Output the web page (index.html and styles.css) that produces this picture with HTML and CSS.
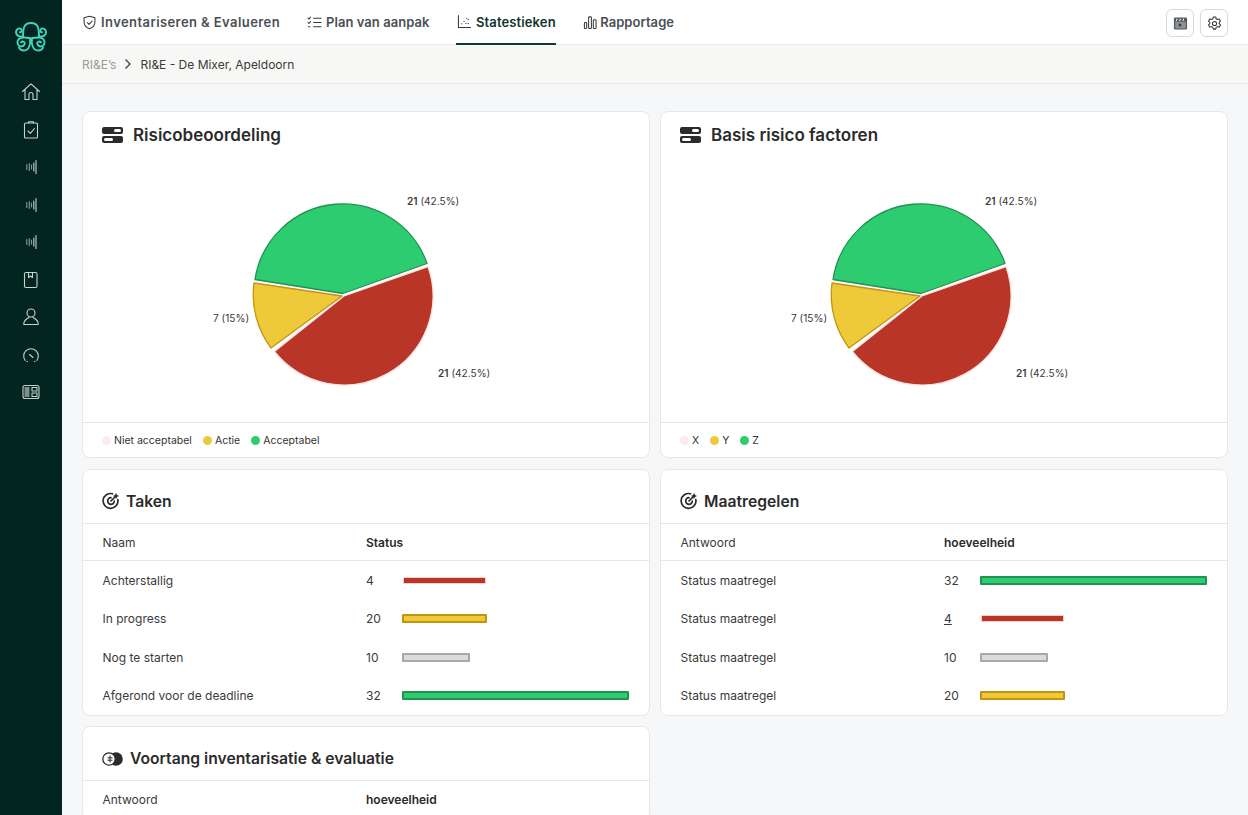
FILE: index.html
```html
<!DOCTYPE html>
<html lang="nl">
<head>
<meta charset="utf-8">
<title>Statestieken</title>
<link rel="stylesheet" href="styles.css">
</head>
<body>
<div class="app">
  <aside class="sidebar">
    <svg class="logo" viewBox="0 0 32 30" fill="none" stroke="#3ed6bd" stroke-width="1.900" stroke-linecap="round">
      <path d="M8 14.500C8 6 9 1 16 1s8 5 8 13.500"/>
      <path d="M8 14.500C6 15 1 14.500 1 10c0-3 3-4.500 5-3 1.500 1.300.5 3.500-1 3.300"/>
      <path d="M24 14.500c2 .5 7 0 7-4.500 0-3-3-4.500-5-3-1.500 1.300-.5 3.500 1 3.300"/>
      <path d="M14 16C9 15 2 15 2.500 21c.5 4 5.500 4.500 7 1.500 1-2.500-2-4-3.500-2.200"/>
      <path d="M18 16c5-1 12-1 11.500 5-.5 4-5.500 4.500-7 1.500-1-2.500 2-4 3.500-2.200"/>
      <path d="M15 16c1 6-1 12.500-6 12.500-2.500 0-4.500-1.500-5-3"/>
      <path d="M17 16c-1 6 1 12.500 6 12.500 2.500 0 4.500-1.500 5-3"/>
    </svg>
    <nav class="side-nav">
      <a class="side-link"><svg viewBox="0 0 20 20"><path d="M1.500 9.500 10 1.800l8.500 7.700M4 8v9.500h4v-5a2 2 0 0 1 4 0v5h4V8"/></svg></a>
      <a class="side-link"><svg viewBox="0 0 20 20"><rect x="3.500" y="3" width="13" height="15" rx="1"/><path d="M7.500 3V1.800h5V3M7 11l2.300 2.300L13.500 8.500"/></svg></a>
      <a class="side-link"><svg class="wave" viewBox="0 0 20 20"><path class="dim" d="M5.800 7.500v5M8.300 6.500v7M10.500 8v4"/><path d="M12.800 6v8M15 3.500v13"/></svg></a>
      <a class="side-link"><svg class="wave" viewBox="0 0 20 20"><path class="dim" d="M5.800 7.500v5M8.300 6.500v7M10.500 8v4"/><path d="M12.800 6v8M15 3.500v13"/></svg></a>
      <a class="side-link"><svg class="wave" viewBox="0 0 20 20"><path class="dim" d="M5.800 7.500v5M8.300 6.500v7M10.500 8v4"/><path d="M12.800 6v8M15 3.500v13"/></svg></a>
      <a class="side-link"><svg viewBox="0 0 20 20"><rect x="3.500" y="2.500" width="12.500" height="15" rx="1.500"/><path d="M7.500 2.500v5l2-1.500 2 1.500v-5"/></svg></a>
      <a class="side-link"><svg viewBox="0 0 20 20"><circle cx="10" cy="6" r="4"/><path d="M8 10.500C5 12 2.500 14 2.800 17.500h14.400C17.500 14 15 12 12 10.500"/></svg></a>
      <a class="side-link"><svg viewBox="0 0 20 20"><path d="M4.200 15.500a7.300 7.300 0 1 1 11.600 0M8.500 9.500l3.500 3"/><path d="M6 16.500h.5M13.500 16.500h.5"/></svg></a>
      <a class="side-link"><svg viewBox="0 0 20 20"><rect x="2" y="3.500" width="16" height="13" rx="2"/><rect x="3.500" y="5" width="5" height="10" fill="#7f8f8b" stroke="none"/><path d="M11 5.500h5v3.500h-5zM11 11h5v3.500h-5z"/></svg></a>
    </nav>
  </aside>
  <div class="content">
    <header class="topbar">
      <nav class="tabs">
        <a class="tab tab-wide"><svg viewBox="0 0 16 16"><path d="M8 1.300 13.800 3v4.500c0 3.500-2.500 6-5.800 7.200C4.700 13.500 2.200 11 2.200 7.500V3zM5.500 8l2 2 3.300-3.500"/></svg>Inventariseren &amp; Evalueren</a>
        <a class="tab"><svg viewBox="0 0 16 16"><path d="M7 3.500h8M7 8h8M7 12.500h8M1 3.300l1 1 1.800-2M1 8l1 1 1.800-2M1.500 12.500h1.500"/></svg>Plan van aanpak</a>
        <a class="tab tab-active"><svg viewBox="0 0 16 16"><path d="M1.500 1.500v13h13"/><path class="dots" d="M5 10.500h.01M7.500 8h.01M9.500 10h.01M12 6h.01M10.500 5h.01M12 10h.01"/></svg>Statestieken</a>
        <a class="tab tab-tight"><svg viewBox="0 0 14 16"><rect x="1" y="8" width="2.500" height="6.500" rx="1"/><rect x="5.500" y="2" width="3" height="12.500" rx="1"/><rect x="10.500" y="5" width="3" height="9.500" rx="1"/></svg>Rapportage</a>
      </nav>
      <div class="top-actions">
        <button class="icon-btn"><svg viewBox="0 0 16 16"><rect class="film" x="1" y="1.500" width="14" height="13" rx="1.500"/><path class="slash" d="M3.500 5l1-2M7 5l1-2M10.500 5l1-2"/><rect class="film-body" x="2.300" y="6" width="11.400" height="7.300"/><path class="solid" d="M6.300 7.800v3.800l3.400-1.900z"/></svg></button>
        <button class="icon-btn"><svg viewBox="0 0 16 16"><circle cx="8" cy="8" r="2.200"/><path d="M6.700 1h2.600l.4 1.900 1.500.8 1.800-.6 1.400 2.400-1.400 1.300v1.400l1.400 1.300-1.400 2.400-1.800-.6-1.500.8-.4 1.900H6.700l-.4-1.900-1.500-.8-1.800.6-1.400-2.400 1.400-1.300V6.800L1.600 5.500 3 3.100l1.800.6 1.500-.8z"/></svg></button>
      </div>
    </header>
    <div class="crumbs">
      <span class="crumb-muted">RI&amp;E’s</span>
      <svg class="crumb-sep" viewBox="0 0 8 12"><path d="M1.500 1.500 6 6l-4.500 4.500"/></svg>
      <span class="crumb-current">RI&amp;E - De Mixer, Apeldoorn</span>
    </div>
    <main class="main">
      <section class="card card-pie">
        <h2 class="pie-title"><svg class="title-icon-wide" viewBox="0 0 21 16"><rect x="0" y="0" width="21" height="7" rx="2"/><rect x="12" y="2" width="7" height="3" rx="1.500" fill="#fff"/><rect x="0" y="9" width="21" height="7" rx="2"/><rect x="2" y="11" width="9" height="3" rx="1.500" fill="#fff"/></svg>Risicobeoordeling</h2>
        <svg class="pie" viewBox="0 0 566 262">
          <path class="g" d="M260 133.500 172 119.500A89 89 0 0 1 344 103.500Z"/>
          <path class="r" d="M261 136 345 106.600A89 89 0 0 1 191.400 191.500Z"/>
          <path class="y" d="M259 136 171 123A89 89 0 0 0 188 188Z"/>
          <text x="324" y="45"><tspan class="lb">21</tspan> (42.5%)</text>
          <text x="130" y="162">7 (15%)</text>
          <text x="355" y="217"><tspan class="lb">21</tspan> (42.5%)</text>
        </svg>
        <div class="legend">
          <span class="legend-item"><i class="dot dot-red"></i>Niet acceptabel</span>
          <span class="legend-item"><i class="dot dot-yellow"></i>Actie</span>
          <span class="legend-item"><i class="dot dot-green"></i>Acceptabel</span>
        </div>
      </section>
      <section class="card card-pie">
        <h2 class="pie-title"><svg class="title-icon-wide" viewBox="0 0 21 16"><rect x="0" y="0" width="21" height="7" rx="2"/><rect x="12" y="2" width="7" height="3" rx="1.500" fill="#fff"/><rect x="0" y="9" width="21" height="7" rx="2"/><rect x="2" y="11" width="9" height="3" rx="1.500" fill="#fff"/></svg>Basis risico factoren</h2>
        <svg class="pie" viewBox="0 0 566 262">
          <path class="g" d="M260 133.500 172 119.500A89 89 0 0 1 344 103.500Z"/>
          <path class="r" d="M261 136 345 106.600A89 89 0 0 1 191.400 191.500Z"/>
          <path class="y" d="M259 136 171 123A89 89 0 0 0 188 188Z"/>
          <text x="324" y="45"><tspan class="lb">21</tspan> (42.5%)</text>
          <text x="130" y="162">7 (15%)</text>
          <text x="355" y="217"><tspan class="lb">21</tspan> (42.5%)</text>
        </svg>
        <div class="legend">
          <span class="legend-item"><i class="dot dot-red"></i>X</span>
          <span class="legend-item"><i class="dot dot-yellow"></i>Y</span>
          <span class="legend-item"><i class="dot dot-green"></i>Z</span>
        </div>
      </section>
      <section class="card">
        <h2 class="table-title"><svg class="title-icon" viewBox="0 0 18 18"><path d="M15.800 7.500A7.400 7.400 0 1 1 10.500 1.800M12.300 9a3.300 3.300 0 1 1-3.300-3.300"/><path d="M9 9l4.500-4.500"/><path class="star" d="M14 1l1 2 2 1-2 1-1 2-1-2-2-1 2-1z"/></svg>Taken</h2>
        <div class="row row-head"><span>Naam</span><b>Status</b></div>
        <div class="row"><span>Achterstallig</span><span class="val">4</span><div class="bar bar-red" style="width:83px"></div></div>
        <div class="row"><span>In progress</span><span class="val">20</span><div class="bar bar-yellow" style="width:85px"></div></div>
        <div class="row"><span>Nog te starten</span><span class="val">10</span><div class="bar bar-gray" style="width:68px"></div></div>
        <div class="row"><span>Afgerond voor de deadline</span><span class="val">32</span><div class="bar bar-green" style="width:227px"></div></div>
      </section>
      <section class="card">
        <h2 class="table-title"><svg class="title-icon" viewBox="0 0 18 18"><path d="M15.800 7.500A7.400 7.400 0 1 1 10.500 1.800M12.300 9a3.300 3.300 0 1 1-3.300-3.300"/><path d="M9 9l4.500-4.500"/><path class="star" d="M14 1l1 2 2 1-2 1-1 2-1-2-2-1 2-1z"/></svg>Maatregelen</h2>
        <div class="row row-head"><span>Antwoord</span><b>hoeveelheid</b></div>
        <div class="row"><span>Status maatregel</span><span class="val">32</span><div class="bar bar-green" style="width:227px"></div></div>
        <div class="row"><span>Status maatregel</span><span class="val"><u>4</u></span><div class="bar bar-red" style="width:83px"></div></div>
        <div class="row"><span>Status maatregel</span><span class="val">10</span><div class="bar bar-gray" style="width:68px"></div></div>
        <div class="row"><span>Status maatregel</span><span class="val">20</span><div class="bar bar-yellow" style="width:85px"></div></div>
      </section>
      <section class="card">
        <h2 class="table-title"><svg class="title-icon-coin" viewBox="0 0 21 14"><circle cx="14" cy="7" r="6.800" fill="#2b2b2b"/><circle cx="7" cy="7" r="6.200" fill="#fff" stroke="#2b2b2b" stroke-width="1.300"/><path d="M8 3.500v7M5.500 5.800h5M5.500 8.200h5" stroke="#2b2b2b" stroke-width="1"/></svg>Voortang inventarisatie &amp; evaluatie</h2>
        <div class="row row-head"><span>Antwoord</span><b>hoeveelheid</b></div>
      </section>
    </main>
  </div>
</div>
</body>
</html>
```
FILE: styles.css
```css
* { box-sizing: border-box; }
html, body { margin: 0; height: 100%; overflow: hidden; }
body { font-family: Inter, "Liberation Sans", sans-serif; color: #2b2b2b; background: #f6f7f9; }
.app { display: flex; height: 815px; }

.sidebar { width: 61.500px; flex: none; background: #02251f; display: flex; flex-direction: column; align-items: center; padding-top: 22px; }
.logo { width: 32px; height: 30px; display: block; }
.side-nav { display: flex; flex-direction: column; margin-top: 21.500px; }
.side-link { height: 37.500px; display: flex; align-items: center; justify-content: center; }
.side-link svg { width: 20px; height: 20px; fill: none; stroke: #c9d1cf; stroke-width: 1.100; stroke-linecap: round; stroke-linejoin: round; }
.side-link .dim { stroke: #8a9a96; }

.content { flex: 1; min-width: 0; display: flex; flex-direction: column; }
.topbar { height: 45px; flex: none; background: #fff; border-bottom: 1px solid #e9e9e9; display: flex; justify-content: space-between; padding: 0 20px 0 20.500px; }
.tabs { display: flex; gap: 27px; }
.tab { display: flex; align-items: center; gap: 4px; height: 45px; padding-bottom: 1px; font-size: 13px; font-weight: 600; color: #4b4f54; letter-spacing: .05px; }
.tab-wide { letter-spacing: .42px; }
.tab svg { width: 15px; height: 15px; fill: none; stroke: #33383c; stroke-width: 1.100; stroke-linecap: round; stroke-linejoin: round; }
.tab-tight { gap: 3px; }
.tab-tight svg { width: 14px; }
.tab-active { color: #11342d; border-bottom: 2px solid #0e3a32; padding: 0 0 0 .5px; letter-spacing: .12px; margin-right: .5px; }
.tab .dots { stroke-width: 1.300; }
.top-actions { display: flex; gap: 6px; padding-top: 9px; }
.icon-btn { width: 28px; height: 28px; padding: 0; background: #fff; border: 1px solid #d9d9d9; border-radius: 6px; display: flex; align-items: center; justify-content: center; }
.icon-btn svg { width: 15px; height: 15px; fill: none; stroke: #33373a; stroke-width: 1.100; stroke-linejoin: round; }
.icon-btn .film { fill: #55595c; stroke: none; }
.icon-btn .slash { stroke: #fff; stroke-width: 1.100; }
.icon-btn .film-body { fill: #8d9093; stroke: none; }
.icon-btn .solid { fill: #33373a; stroke: none; }

.crumbs { height: 39px; flex: none; background: #f7f7f5; border-bottom: 1px solid #e6e6e6; display: flex; align-items: center; gap: 8px; padding: 0 20.500px; font-size: 12px; }
.crumb-muted { color: #9a9a9a; }
.crumb-current { color: #3a3a3a; }
.crumb-sep { width: 8px; height: 12px; fill: none; stroke: #444; stroke-width: 1.400; }

.main { flex: 1; display: grid; grid-template-columns: 568px 568px; column-gap: 10px; row-gap: 10px; align-content: start; align-items: start; padding: 27px 0 0 20.500px; overflow: hidden; }
.card { background: #fff; border: 1px solid #e6e7ea; border-radius: 8px; }
.card-pie { margin-bottom: .5px; }

.pie-title { margin: 0; height: 48px; padding: 0 19px 2px; display: flex; align-items: center; gap: 10px; font-size: 17px; font-weight: 600; color: #2b2b2b; }
.title-icon-wide { width: 21px; height: 16px; fill: #2b2b2b; flex: none; }
.pie { display: block; width: 566px; height: 262px; }
.pie path { stroke-width: 1.300; stroke-linejoin: round; }
.pie .g { fill: #2ecc71; stroke: #1f9350; }
.pie .r { fill: #b93528; stroke: #fbe3e0; }
.pie .y { fill: #eec93a; stroke: #c4940f; }
.pie text { font-size: 10.100px; fill: #3a3a3a; font-family: Inter, sans-serif; }
.pie .lb { font-weight: 600; }
.legend { height: 35px; border-top: 1px solid #e6e7ea; display: flex; align-items: center; gap: 11px; padding: 0 19px; font-size: 10.500px; color: #333; }
.legend-item { display: flex; align-items: center; gap: 3px; }
.dot { width: 9px; height: 9px; border-radius: 50%; }
.dot-red { background: #fdeaea; }
.dot-yellow { background: #eec93a; }
.dot-green { background: #2ecc71; }

.table-title { margin: 0; height: 54px; padding: 10px 19px 0; display: flex; align-items: center; gap: 6px; font-size: 15.700px; font-weight: 600; color: #2b2b2b; border-bottom: 1px solid #e6e7ea; }
.title-icon { width: 18px; height: 18px; flex: none; fill: none; stroke: #2b2b2b; stroke-width: 1.700; stroke-linecap: round; }
.title-icon .star { fill: #2b2b2b; stroke: none; }
.title-icon-coin { width: 21px; height: 14px; flex: none; margin-right: 1px; }
.row { display: grid; grid-template-columns: 263.500px 36px 1fr; align-items: center; height: 38.500px; padding: 0 19px 0 19.500px; font-size: 12px; color: #3a3a3a; }
.row-head { height: 37.500px; padding-top: 1px; border-bottom: 1px solid #e6e7ea; }
.row-head b { font-weight: 600; color: #2b2b2b; grid-column: 2 / 4; }
.bar { height: 9px; border-radius: 1px; border: 2px solid; }
.bar-red { background: #b93528; border: 1px solid #f8cfca; height: 7px; margin-left: 1px; }
.bar-yellow { background: #eec93a; border-color: #c4940f; }
.bar-gray { background: #dcdcdc; border-color: #a9a9a9; }
.bar-green { background: #2ecc71; border-color: #1f9350; }
```
